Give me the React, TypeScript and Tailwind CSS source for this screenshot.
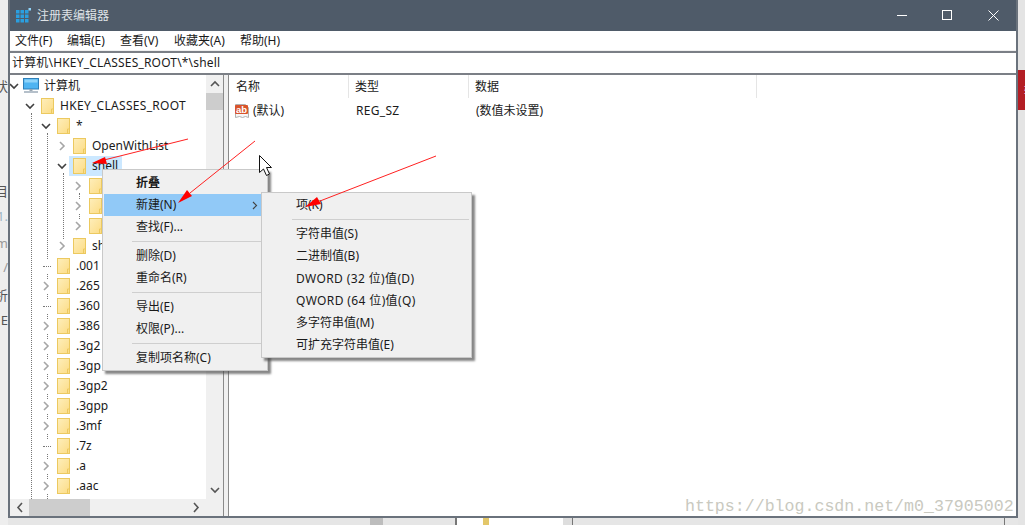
import React from "react";

const Chevron = ({ open, light }: { open?: boolean; light?: boolean }) => (
  <svg width="10" height="10" viewBox="0 0 10 10" className="shrink-0" fill="none" stroke={light ? "#a6a6a6" : "#404040"} strokeWidth="1.6">
    {open ? <path d="M1 3l4 4 4-4" /> : <path d="M3 1l4 4-4 4" />}
  </svg>
);

const Folder = () => (
  <svg width="13" height="16" viewBox="0 0 13 16" className="shrink-0">
    <defs>
      <linearGradient id="fld" x1="0" y1="0" x2="1" y2="1">
        <stop offset="0" stopColor="#feeebb" />
        <stop offset="1" stopColor="#fcdc85" />
      </linearGradient>
    </defs>
    <rect x="0.5" y="0.5" width="12" height="15" fill="url(#fld)" stroke="#ecc95f" />
    <path d="M10.5 11v4.5M10.5 11h2" stroke="#ecc95f" fill="none" />
  </svg>
);

const Computer = () => (
  <svg width="16" height="16" viewBox="0 0 16 16" className="shrink-0">
    <rect x="0.5" y="0.5" width="15" height="10.5" fill="#4fb4f2" stroke="#2f7fb8" />
    <rect x="1.5" y="1.5" width="13" height="3" fill="#8fd4fa" />
    <rect x="6.5" y="11" width="3" height="2" fill="#9aa7b2" />
    <rect x="1" y="13" width="14" height="2" fill="#b5c0ca" />
  </svg>
);

const levelPad: Record<number, string> = {
  1: "pl-[16px]",
  2: "pl-[32px]",
  3: "pl-[48px]",
  4: "pl-[64px]",
};

type Node = { label: string; level: number; state: "open" | "closed" | "leaf"; selected?: boolean; wide?: boolean };

const nodes: Node[] = [
  { label: "HKEY_CLASSES_ROOT", level: 1, state: "open", wide: true },
  { label: "*", level: 2, state: "open" },
  { label: "OpenWithList", level: 3, state: "closed" },
  { label: "shell", level: 3, state: "open", selected: true },
  { label: "", level: 4, state: "closed" },
  { label: "", level: 4, state: "closed" },
  { label: "", level: 4, state: "closed" },
  { label: "shellex", level: 3, state: "closed" },
  { label: ".001", level: 2, state: "leaf" },
  { label: ".265", level: 2, state: "closed" },
  { label: ".360", level: 2, state: "leaf" },
  { label: ".386", level: 2, state: "closed" },
  { label: ".3g2", level: 2, state: "closed" },
  { label: ".3gp", level: 2, state: "closed" },
  { label: ".3gp2", level: 2, state: "closed" },
  { label: ".3gpp", level: 2, state: "closed" },
  { label: ".3mf", level: 2, state: "closed" },
  { label: ".7z", level: 2, state: "leaf" },
  { label: ".a", level: 2, state: "closed" },
  { label: ".aac", level: 2, state: "closed" },
];

const TreeRow = ({ node }: { node: Node }) => (
  <div className={`relative flex h-5 items-center ${levelPad[node.level]}`}>
    <span className="-ml-px flex h-[14px] w-[10px] shrink-0 items-center justify-center bg-white">
      {node.state === "open" && <Chevron open />}
      {node.state === "closed" && <Chevron light />}
      {node.state === "leaf" && <span className="ml-[2px] w-[8px] border-t border-dotted border-[#777]" />}
    </span>
    <span className={`ml-[2px] flex h-5 items-center pl-[4px] ${node.selected ? "w-[53px] bg-[#cce8ff]" : ""}`}>
      <Folder />
      <span className={`ml-[6px] whitespace-nowrap ${node.wide ? "tracking-[0.3px]" : ""}`}>{node.label}</span>
    </span>
  </div>
);

const Sep = ({ inset }: { inset: string }) => (
  <div className={`flex h-[6px] items-center ${inset}`}>
    <div className="h-px w-full bg-[#cfcfcf]" />
  </div>
);

const Item = ({ label, bold, active, tall, wide, pad = "pl-[32px]" }: { label: string; bold?: boolean; active?: boolean; tall?: boolean; wide?: boolean; pad?: string }) => (
  <div className={`flex items-center justify-between ${pad} ${tall ? "h-[23px]" : "h-[22px]"} ${active ? "bg-[#91c9f7]" : ""} ${bold ? "font-bold" : ""}`}>
    <span className={`whitespace-nowrap ${wide ? "tracking-[0.38px]" : ""}`}>{label}</span>
    {active && (
      <svg width="6" height="9" viewBox="0 0 6 9" className="mr-[3px]" fill="none" stroke="#444" strokeWidth="1.2">
        <path d="M1 1l3.5 3.5L1 8" />
      </svg>
    )}
  </div>
);

const fragments = [
  { t: "状", cls: "mt-[78px]" },
  { t: "目", cls: "mt-[89px]" },
  { t: "1.", cls: "mt-[9px] text-[#9fb4c4]" },
  { t: "m", cls: "mt-[11px] text-[#999]" },
  { t: "/", cls: "mt-[8px] text-[#999]" },
  { t: "析", cls: "mt-[12px]" },
  { t: "E", cls: "mt-[9px]" },
];

export default function App() {
  return (
    <div className="relative flex h-[525px] w-[1025px] overflow-hidden bg-[#eeeeee] font-['Noto_Sans','Noto_Sans_CJK_SC',sans-serif] text-[12px] leading-none text-[#1a1a1a]">
      {/* page behind the window, left edge */}
      <div className="flex w-2 shrink-0 flex-col items-end overflow-hidden bg-[#eeeeee] text-[#555]">
        {fragments.map((f) => (
          <div key={f.t} className={`flex h-4 w-4 shrink-0 items-center justify-end text-[13px] ${f.cls}`}>
            {f.t}
          </div>
        ))}
      </div>

      <div className="flex w-[1010px] shrink-0 flex-col">
        {/* window */}
        <div className="flex h-[518px] shrink-0 flex-col border-x-2 border-b-2 border-[#6a727c] bg-white">
          <div className="flex h-[31px] shrink-0 items-center bg-[#4f5b69] text-[#dfe3e7]">
            <svg width="15" height="15" viewBox="0 0 15 15" className="ml-[6px]">
              <g fill="#2a9fe0">
                <rect x="0" y="2" width="3.5" height="3.5" />
                <rect x="4.5" y="2" width="3.5" height="3.5" />
                <rect x="9" y="2" width="3.5" height="3.5" />
                <rect x="0" y="6.5" width="3.5" height="3.5" />
                <rect x="4.5" y="6.5" width="3.5" height="3.5" />
                <rect x="9" y="6.5" width="3.5" height="3.5" />
                <rect x="0" y="11" width="3.5" height="3.5" />
                <rect x="4.5" y="11" width="3.5" height="3.5" />
                <rect x="9" y="11" width="3.5" height="3.5" />
              </g>
              <rect x="12.5" y="0" width="2.5" height="2.5" fill="#8fd4fa" />
            </svg>
            <span className="ml-[6px] text-[12px]">注册表编辑器</span>
            <div className="ml-auto flex items-center pr-[17px] text-white">
              <svg width="11" height="11" viewBox="0 0 11 11" stroke="#fff" fill="none">
                <path d="M0 5.5h10" />
              </svg>
              <svg width="11" height="11" viewBox="0 0 11 11" stroke="#fff" fill="none" className="ml-[34px]">
                <rect x="0.5" y="0.5" width="9" height="9" />
              </svg>
              <svg width="11" height="11" viewBox="0 0 11 11" stroke="#fff" fill="none" className="ml-[35px]">
                <path d="M0.5 0.5l10 10M10.5 0.5l-10 10" />
              </svg>
            </div>
          </div>

          <div className="flex h-[19px] shrink-0 items-center bg-white pl-[5px]">
            <span className="w-[52px]">文件(F)</span>
            <span className="w-[53px]">编辑(E)</span>
            <span className="w-[54px]">查看(V)</span>
            <span className="w-[66px]">收藏夹(A)</span>
            <span>帮助(H)</span>
          </div>
          <div className="h-px shrink-0 bg-[#f0f0f0]" />
          <div className="flex h-[24px] shrink-0 items-center border-y-2 border-[#7b7f86] pl-[2px] tracking-[0.18px]">
            计算机\HKEY_CLASSES_ROOT\*\shell
          </div>

          <div className="flex min-h-0 flex-1">
            {/* tree pane */}
            <div className="flex w-[213px] shrink-0 flex-col">
              <div className="flex min-h-0 flex-1">
                <div className="relative w-[196px] shrink-0 overflow-hidden pt-[1px]">
                  {/* tree guide lines, the rows paint over them */}
                  <div className="absolute left-[21px] top-[38px] h-[400px] border-l border-dotted border-[#777]" />
                  <div className="absolute left-[37px] top-[58px] h-[380px] border-l border-dotted border-[#777]" />
                  <div className="absolute left-[53px] top-[98px] h-[70px] border-l border-dotted border-[#777]" />
                  <div className="absolute left-[69px] top-[118px] h-[40px] border-l border-dotted border-[#777]" />
                  <div className="relative flex h-5 items-center">
                    <span className="-ml-px flex w-[10px] justify-center"><Chevron open /></span>
                    <span className="ml-[4px]"><Computer /></span>
                    <span className="ml-[5px]">计算机</span>
                  </div>
                  {nodes.map((n, i) => (
                    <TreeRow key={i} node={n} />
                  ))}
                </div>
                <div className="flex w-[17px] shrink-0 flex-col items-center bg-[#f0f0f0]">
                  <svg width="10" height="18" viewBox="0 0 10 18" fill="none" stroke="#555" strokeWidth="1.6">
                    <path d="M1 11l4-4 4 4" />
                  </svg>
                  <div className="h-[17px] w-full bg-[#cdcdcd]" />
                  <svg width="10" height="18" viewBox="0 0 10 18" fill="none" stroke="#555" strokeWidth="1.6" className="mt-auto">
                    <path d="M1 7l4 4 4-4" />
                  </svg>
                </div>
              </div>
              <div className="flex h-[17px] shrink-0 items-center bg-[#f0f0f0]">
                <svg width="18" height="17" viewBox="0 0 18 17" fill="none" stroke="#555" strokeWidth="1.6" className="shrink-0">
                  <path d="M12 4l-4 4.5 4 4.5" />
                </svg>
                <div className="ml-px h-full w-[61px] bg-[#cdcdcd]" />
                <svg width="18" height="17" viewBox="0 0 18 17" fill="none" stroke="#555" strokeWidth="1.6" className="ml-[98px] shrink-0">
                  <path d="M6 4l4 4.5-4 4.5" />
                </svg>
              </div>
            </div>

            {/* splitter */}
            <div className="w-[6px] shrink-0 border-x border-[#8a8a8a] bg-[#f0f0f0]" />

            {/* values pane */}
            <div className="min-w-0 flex-1 bg-white">
              <div className="flex h-[23px] items-center">
                <div className="flex h-full w-[120px] items-center border-r border-[#e5e5e5] pl-[7px] pt-px">名称</div>
                <div className="flex h-full w-[120px] items-center border-r border-[#e5e5e5] pl-[6px] pt-px">类型</div>
                <div className="flex h-full w-[288px] items-center border-r border-[#e5e5e5] pl-[6px] pt-px">数据</div>
              </div>
              <div className="flex h-[24px] items-center pt-px">
                <div className="flex w-[120px] items-center pl-[5px]">
                  <svg width="16" height="16" viewBox="0 0 16 16" className="shrink-0">
                    <path d="M1.5 1.5h10l3 3v10l-3-1-3 1-3-1-4 1z" fill="#f6f6f6" stroke="#b0b0b0" />
                    <rect x="1" y="2" width="13" height="9" fill="#d9542b" rx="1" />
                    <text x="7.5" y="9.5" textAnchor="middle" fontSize="9.5" fontWeight="700" fill="#fff" fontFamily="Liberation Sans, sans-serif">ab</text>
                  </svg>
                  <span className="ml-[3px]">(默认)</span>
                </div>
                <div className="w-[120px] pl-[7px] tracking-[0.3px]">REG_SZ</div>
                <div className="pl-[7px]">(数值未设置)</div>
              </div>
            </div>
          </div>
        </div>

        {/* page behind the window, bottom edge */}
        <div className="flex h-[7px] shrink-0 bg-[#e6e6e6]">
          <div className="ml-[362px] w-[13px] bg-[#bdbdbd]" />
          <div className="ml-[72px] w-[2px] bg-[#777]" />
          <div className="flex w-[106px] overflow-hidden bg-white pl-[26px]">
            <div className="h-full w-[6px] bg-[#e3c76a]" />
          </div>
          <div className="w-[9px] bg-[#dedede]" />
          <div className="w-[1px] bg-[#777]" />
          <div className="ml-[431px] w-[1px] bg-[#777]" />
        </div>
      </div>

      {/* page behind the window, right edge */}
      <div className="flex flex-1 flex-col bg-[#e4e4e4]">
        <div className="mt-[70px] flex h-[40px] w-full items-center justify-center overflow-hidden bg-[#b31e24] text-[11px] text-white">
          <span className="ml-[6px]">转</span>
        </div>
      </div>

      {/* context menu */}
      <div className="absolute left-[102px] top-[169px] w-[166px] border border-[#c9c9c9] bg-[#f0f0f0] pb-px pl-px pr-[6px] pt-[2px] shadow-[3px_3px_2px_rgba(70,70,70,0.65)]">
        <Item label="折叠" bold />
        <Item label="新建(N)" active />
        <Item label="查找(F)..." />
        <Sep inset="pl-[28px] -mr-[4px]" />
        <Item label="删除(D)" tall />
        <Item label="重命名(R)" />
        <Sep inset="pl-[28px] -mr-[4px]" />
        <Item label="导出(E)" tall />
        <Item label="权限(P)..." />
        <Sep inset="pl-[28px] -mr-[4px]" />
        <Item label="复制项名称(C)" tall />
      </div>

      {/* submenu */}
      <div className="absolute left-[261px] top-[192px] w-[211px] border border-[#c9c9c9] bg-[#f0f0f0] py-px shadow-[3px_3px_2px_rgba(70,70,70,0.65)]">
        <Item label="项(K)" pad="pl-[34px]" />
        <Sep inset="pl-[30px] pr-[2px]" />
        <Item label="字符串值(S)" pad="pl-[34px]" tall />
        <Item label="二进制值(B)" pad="pl-[34px]" />
        <Item label="DWORD (32 位)值(D)" pad="pl-[34px]" tall wide />
        <Item label="QWORD (64 位)值(Q)" pad="pl-[34px]" wide />
        <Item label="多字符串值(M)" pad="pl-[34px]" />
        <Item label="可扩充字符串值(E)" pad="pl-[34px]" />
      </div>

      {/* red annotation arrows and mouse pointer */}
      <svg className="pointer-events-none absolute left-0 top-0" width="1025" height="525" viewBox="0 0 1025 525" fill="none">
        <g stroke="#ff2020" strokeWidth="1">
          <path d="M188 139L104 160" />
          <path d="M255 141L190 193" />
          <path d="M436 156L320 201" />
        </g>
        <g fill="#ff0000">
          <path d="M92 163l13-6 2 7z" />
          <path d="M178 203l9-13 5 6z" />
          <path d="M305 207l12-10 4 7z" />
        </g>
        <path d="M259.5 155.5v17l4-3.5 3 6.5 3-1.5-3-6.5h5z" fill="#fff" stroke="#111" />
      </svg>

      {/* watermark */}
      <span className="pointer-events-none absolute left-[685px] top-[497px] whitespace-nowrap font-['Liberation_Mono',monospace] text-[16.6px] leading-[20px] text-[#c9c9c0]">
        https://blog.csdn.net/m0_37905002
      </span>
    </div>
  );
}
